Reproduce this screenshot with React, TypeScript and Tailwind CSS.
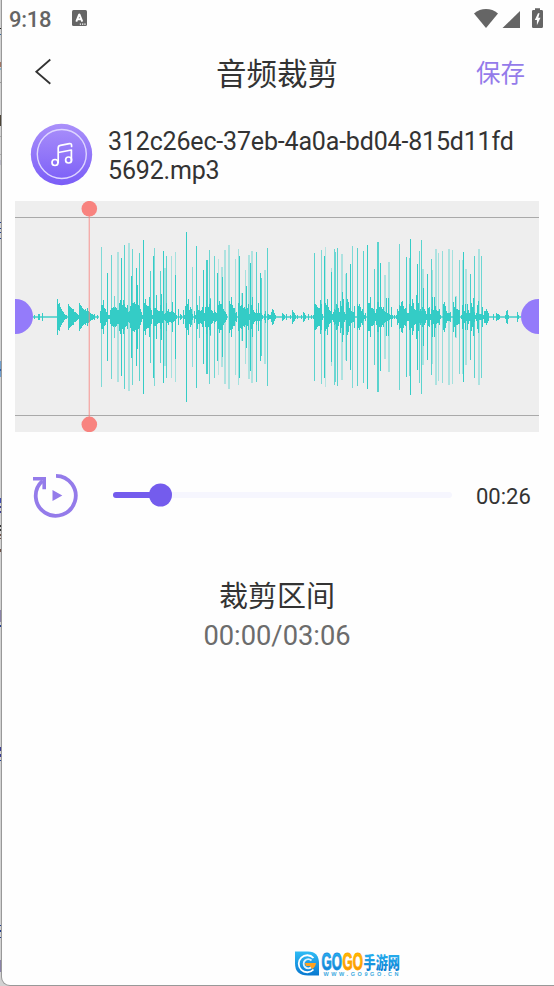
import React, { FC } from "react";

type Spike = [x: number, height: number, opacity?: number, width?: number];

// Tall peaks, measured from the centre line
const SPIKES: Spike[] = [
	[101, 70, 0.6], [107, 44], [111, 62, 0.7], [114, 21, 0.7], [117, 65, 0.35, 2], [121, 59], [124, 72, 0.8],
	[128, 74, 0.35, 2], [131, 41], [132, 68, 0.7], [136, 49], [137, 32], [139, 64, 0.8], [143, 77],
	[150, 46, 0.8], [153, 61], [154, 69, 0.6], [156, 22], [160, 46, 0.8], [163, 66], [164, 49, 0.35, 2], [166, 61, 0.8],
	[171, 61, 0.4], [175, 42], [175, 65, 0.4], [186, 85], [192, 50, 0.5], [196, 71, 0.9], [199, 21, 0.7],
	[203, 47], [206, 57, 0.9, 2], [209, 67, 0.7], [210, 19, 0.7], [214, 61, 0.7], [217, 44], [218, 58, 0.3],
	[221, 50, 0.35, 2], [222, 40], [224, 67, 0.35, 2], [228, 72, 0.35, 2], [235, 58, 0.4], [238, 68, 0.4], [239, 61],
	[241, 24, 0.35, 2], [245, 47, 0.4], [246, 31], [248, 62, 0.35, 2], [250, 54], [251, 66, 0.35, 2], [256, 65, 0.8],
	[260, 44], [261, 39, 0.8], [264, 47, 0.35, 2], [267, 69, 0.8],
	[314, 64, 0.8], [321, 67, 0.6], [324, 61], [325, 70, 0.3], [331, 45], [331, 49, 0.4], [334, 68, 0.7],
	[335, 65, 0.7], [337, 69, 0.8], [341, 63, 0.35, 2], [346, 44, 0.9], [345, 43, 0.3], [350, 53], [352, 71, 0.6],
	[357, 69, 0.8], [363, 66, 0.8], [367, 72], [370, 20], [374, 48, 0.8], [377, 75, 0.8, 2], [380, 54],
	[384, 42, 0.35, 2], [388, 55, 0.35, 2], [399, 73, 0.7], [406, 60, 0.9], [409, 59, 0.6], [410, 78],
	[417, 53], [419, 66, 0.7], [421, 77, 0.8], [422, 48, 0.35, 2], [427, 43], [431, 58, 0.8], [432, 47, 0.4],
	[435, 68, 0.35, 2], [438, 64, 0.4], [442, 66, 0.5], [448, 68, 0.35, 2], [452, 67, 0.4], [455, 21, 0.35, 2],
	[459, 57, 0.6], [462, 57, 0.4], [463, 65], [465, 48, 0.35, 2], [470, 43, 0.9], [474, 61, 0.8],
	[478, 68, 0.35, 2], [481, 61, 0.7],
];

// Low-level envelope, one value for each pixel column from x = 33
const LEVELS: number[] = [
	1, 2, 1, 1, 1, 3, 3, 1, 1, 4, 1, 1, 1, 1, 1, 1, 1, 1, 1, 1, 1, 1, 1, 1,
	18, 13, 14, 10, 8, 6, 5, 3, 2, 2, 1, 13, 11, 10, 9, 8, 8, 5, 5, 4, 3, 2,
	14, 12, 11, 9, 8, 7, 8, 6, 9, 6, 5, 4, 3, 3, 2, 3, 1, 1, 2, 1, 0,
	6, 12, 12, 17, 9, 8, 5, 6, 2, 2, 7, 9, 9, 10, 9, 10, 9, 7, 7, 14, 17, 15, 12, 17, 13, 10, 9, 12, 5, 6, 11,
	10, 14, 14, 15, 13, 14, 12, 12, 11, 8, 5, 2, 12, 14, 18, 12, 11, 11, 20, 9, 7, 2, 10, 9, 9, 8, 7, 6, 6,
	12, 23, 6, 15, 3, 4, 14, 6, 8, 5, 5, 6, 15, 5, 4, 2, 2, 1, 8, 1, 3, 2, 1, 7, 2, 11, 15, 13, 18, 7, 10,
	8, 3, 1, 6, 2, 5, 12, 7, 7, 6, 7, 10, 4, 4, 10, 17, 11, 10, 13, 18, 7, 6, 4, 7, 5, 4, 14, 12, 16, 13,
	13, 13, 8, 6, 5, 3, 1, 0, 16, 13, 20, 12, 9, 9, 4, 5, 1, 14, 11, 11, 12, 24, 9, 10, 8, 10, 9, 13, 3, 13,
	12, 20, 7, 5, 4, 8, 4, 14, 4, 10, 4, 2, 1, 3, 6, 1, 3, 3, 2, 2, 5, 8, 7, 4, 2, 1, 1, 1,
	1, 1, 1, 4, 3, 2, 1, 3, 1, 1, 1, 2, 1, 7, 5, 4, 2, 1, 2, 1, 1, 1, 2, 1, 5, 4, 2, 1, 1, 3, 1, 1, 2, 1, 2,
	13, 13, 12, 10, 9, 9, 17, 13, 3, 1, 6, 14, 12, 18, 10, 7, 6, 10, 3, 5, 8, 7, 13, 12, 9, 5, 16, 11, 25,
	18, 5, 3, 14, 18, 15, 9, 5, 6, 5, 5, 11, 1, 1, 13, 11, 13, 10, 6, 8, 4, 2, 4, 1, 14, 14, 14, 20, 9, 9,
	8, 6, 4, 8, 15, 15, 10, 14, 10, 8, 10, 6, 5, 19, 4, 19, 3, 2, 10, 2, 1, 2, 1, 2, 8, 6, 12, 11, 15, 16,
	11, 8, 9, 5, 4, 4, 13, 15, 11, 18, 14, 8, 7, 22, 9, 14, 6, 8, 6, 10, 29, 8, 6, 3, 15, 9, 10, 3, 8, 20,
	7, 20, 11, 7, 6, 6, 8, 2, 1, 1, 13, 15, 11, 6, 4, 4, 4, 5, 1, 1, 15, 10, 20, 8, 8, 7, 7, 1, 2, 12, 12,
	6, 13, 4, 13, 7, 4, 4, 14, 10, 19, 5, 2, 4, 12, 16, 3, 3, 3, 10, 2, 6, 6, 8, 6, 4, 1, 1, 1, 1, 3, 1, 1,
	4, 3, 3, 2, 1, 1, 1, 1, 1, 2, 6, 7, 2, 1, 1, 1, 1, 1, 1, 1, 1, 5, 2, 1, 1,
];

// Slivers of the window behind, seen along the left edge: [top, height, colour]
const EDGE_MARKS: [number, number, string][] = [
	[28, 1, "#222222"], [34, 1, "#3b6a9b"], [62, 5, "#a27564"], [68, 2, "#8bb4cc"], [82, 1, "#999999"],
	[115, 11, "#4c4437"], [136, 1, "#aaaaaa"], [154, 1, "#aaaaaa"], [160, 5, "#b9b9c4"],
	[222, 1, "#24408e"], [228, 1, "#24408e"], [232, 1, "#24408e"], [238, 1, "#24408e"],
	[361, 16, "#6f9dcc"], [369, 2, "#315da3"],
	[498, 5, "#3f4db0"], [506, 2, "#3b3f91"], [511, 2, "#3b3f91"],
	[525, 2, "#333333"], [529, 2, "#333333"], [534, 2, "#6d5248"], [538, 1, "#6d5248"], [549, 3, "#6d5248"],
	[610, 12, "#8a83a8"], [625, 2, "#24408e"],
	[747, 4, "#3a3d91"], [754, 3, "#3a3d91"], [760, 1, "#24408e"],
	[925, 1, "#24408e"], [930, 2, "#24408e"], [937, 1, "#24408e"], [960, 12, "#8a83a8"],
];

const StatusBar: FC = () => (
	<div className="flex h-[38px] items-center pl-[9px] pr-[10px] text-[#656565]">
		<span className="mt-px w-[42px] text-[22px] leading-none font-medium tracking-[-0.3px]">9:18</span>
		<svg className="mb-[2px] ml-[21px]" width="15" height="16" viewBox="0 0 15 16">
			<rect width="15" height="16" rx="1.5" fill="#656565" />
			<path d="M4.3 11.700 7.200 4.400h.2l2.900 7.300M5.500 9.300h3.600" fill="none" stroke="#fff" strokeWidth="1.9" strokeLinejoin="bevel" />
			<path d="M7.800 14.100H9m1 0h1.300m1 0h1.300" stroke="#fff" strokeWidth="1.2" />
		</svg>
		<svg className="mb-px ml-auto" width="70" height="22" viewBox="0 0 70 22" fill="#656565">
			<path d="M0 5.5C7-.4 17-.4 24 5.5L12 20Z" />
			<path d="M46 3v17H28.5Z" />
			<path d="M58 3.5c0-.9.5-1.5 1.3-1.5H61V.3h5V2h1.7c.8 0 1.3.6 1.3 1.500v15c0 .9-.5 1.500-1.300 1.500h-8.400c-.8 0-1.300-.6-1.300-1.500Z" />
			<path d="M64 5.200 60.800 12h2.100v5.300l3.600-7.500h-2.200L65.600 5.200Z" fill="#fff" />
		</svg>
	</div>
);

const Header: FC = () => (
	<header className="grid h-[70px] grid-cols-[1fr_auto_1fr] items-center pr-[29px] pl-[34px]">
		<button className="mb-[2px] w-fit" aria-label="Back">
			<svg width="18" height="28" viewBox="0 0 18 28" fill="none" stroke="#333" strokeWidth="1.8">
				<path d="M16.3 1.500 2.300 13.700l14 12" />
			</svg>
		</button>
		<h1 className="-ml-[5px] mt-[4px] text-[30.5px] leading-none text-[#333]">音频裁剪</h1>
		<button className="mt-[2px] justify-self-end text-[24.5px] leading-none text-[#947bea]">保存</button>
	</header>
);

const FileInfo: FC = () => (
	<section className="flex h-[93px] pl-[30px]">
		<svg className="mt-[15px]" width="63" height="63" viewBox="0 0 63 63">
			<defs>
				<linearGradient id="disc" x1="0" y1="0" x2="0" y2="1">
					<stop offset="0" stopColor="#aa90fa" />
					<stop offset="1" stopColor="#7a5df7" />
				</linearGradient>
			</defs>
			<circle cx="31.5" cy="31.5" r="30.7" fill="url(#disc)" />
			<circle cx="31.8" cy="31" r="24.5" fill="none" stroke="#ded5ff" strokeWidth="1.4" />
			<g fill="none" stroke="#fff" strokeWidth="1.7" strokeLinecap="round" strokeLinejoin="round">
				<circle cx="25" cy="39.5" r="3" />
				<circle cx="38.6" cy="37" r="3" />
				<path d="M28.200 39.500V25q0-2.200 2.200-2.600l9-1.800q2.200-.4 2.200 1.900v1M28.400 29.500l13-2.500v10" />
			</g>
		</svg>
		<p className="mt-[19px] ml-[15px] w-[420px] text-[25px] leading-[29px] tracking-[-0.17px] text-[#333]">
			312c26ec-37eb-4a0a-bd04-815d11fd
			<br />
			5692.mp3
		</p>
	</section>
);

const Waveform: FC = () => (
	<svg className="ml-[15px] block" width="524" height="231" viewBox="15 201 524 231">
		<rect x="15" y="201" width="524" height="231" fill="#eeeeee" />
		<g shapeRendering="crispEdges">
			<path d="M15 217.5h524M15 415.5h524" stroke="#a9a9a9" />
			<g fill="#34ccc6">
				{SPIKES.map(([x, height, opacity = 1, width = 1], i) => (
					<rect key={i} x={x} y={317 - height} width={width} height={height * 2} opacity={opacity} />
				))}
				{LEVELS.map((level, i) => (
					<rect key={i} x={33 + i} y={317 - level} width="1" height={level * 2} opacity={level === 1 ? 0.7 : 1} />
				))}
			</g>
		</g>
		<circle cx="15.5" cy="316.5" r="17.5" fill="#947bfa" />
		<circle cx="538.5" cy="316.5" r="17.5" fill="#947bfa" />
		<path d="M89.3 209v215" stroke="#f8837f" strokeWidth="1.4" opacity="0.6" />
		<circle cx="89.3" cy="208.7" r="7.8" fill="#f8837f" />
		<circle cx="89.3" cy="424.4" r="7.8" fill="#f8837f" />
	</svg>
);

const Player: FC = () => (
	<section className="mt-[40px] flex h-[48px] items-center pl-[32px]">
		<svg width="48" height="48" viewBox="32 472 48 48">
			<path d="M56 475.800A20 20 0 1 1 42.500 480.800" fill="none" stroke="#947bea" strokeWidth="3.8" />
			<path d="M33 478.800h11.200v10.500" fill="none" stroke="#947bea" strokeWidth="3.6" />
			<path d="M52.500 490v11l9.800-5.500Z" fill="#947bea" />
		</svg>
		<div className="relative mb-[2px] ml-[33px] h-[6px] w-[339px] rounded-full bg-[#f6f6fe]">
			<div className="h-full w-[48px] rounded-full bg-[#745ced]" />
			<div className="absolute top-1/2 left-[36px] size-[23px] -translate-y-1/2 rounded-full bg-[#745ced]" />
		</div>
		<span className="mt-[2px] ml-[24px] text-[22px] leading-none text-[#333]">00:26</span>
	</section>
);

const Watermark: FC = () => (
	<svg className="absolute top-[944px] left-[293px] overflow-visible" width="116" height="40" viewBox="293 944 116 40">
		<defs>
			<linearGradient id="blue" x1="0" y1="0" x2="0" y2="1">
				<stop offset="0" stopColor="#2fbcf5" />
				<stop offset="1" stopColor="#0878d0" />
			</linearGradient>
			<linearGradient id="orange" x1="0" y1="0" x2="0" y2="1">
				<stop offset="0" stopColor="#ffc800" />
				<stop offset="1" stopColor="#f98a00" />
			</linearGradient>
		</defs>
		<path d="M295 951.500h13q11 0 11 12v12h-11q-13 0-13-12Z" fill="url(#blue)" />
		<path d="M313.500 958a8.500 8.500 0 1 0 0 11.500" fill="none" stroke="#fff" strokeWidth="1.8" />
		<path d="M311.500 960.500a4.600 4.600 0 1 0 0 6.500" fill="none" stroke="#d8f2ff" strokeWidth="1.8" />
		<path d="M305 963h11q-.5 4-4 6l-2-3H306Z" fill="#ffa11c" />
		<g fontFamily="'Liberation Sans', sans-serif" fontWeight="900">
			<g fontSize="23" strokeWidth="0.9">
				<text x="321.500" y="969.500" textLength="20.500" lengthAdjust="spacingAndGlyphs" fill="url(#blue)" stroke="#1a90e0">GO</text>
				<text x="342.500" y="969.500" textLength="20.500" lengthAdjust="spacingAndGlyphs" fill="url(#orange)" stroke="#fda400">GO</text>
			</g>
			<text x="363.500" y="968.500" fontSize="16.500" textLength="36.500" lengthAdjust="spacingAndGlyphs" fill="url(#blue)" fontFamily="'Noto Sans CJK SC', sans-serif">手游网</text>
			<text x="323.500" y="976" fontSize="5.500" fontWeight="700" textLength="75" fill="#3caade">WWW.GO9GO.CN</text>
		</g>
	</svg>
);

const App: FC = () => {
	return (
		<div className="relative h-[986px] w-[554px] overflow-hidden bg-[#d2d2d2] font-[Roboto,'Noto_Sans_CJK_SC',sans-serif]">
			{EDGE_MARKS.map(([top, height, color]) => (
				<div key={top} className="absolute left-0 w-[2px]" style={{ top, height, backgroundColor: color }} />
			))}
			<main className="relative ml-[2px] h-[985px] rounded-bl-[8px] bg-[#fefefe] shadow-[0_0_0_1px_#999]">
				<div className="-ml-[2px]">
					<StatusBar />
					<Header />
					<FileInfo />
					<Waveform />
					<Player />
					<section className="mt-[60px] flex flex-col items-center text-center">
						<h2 className="text-[29px] leading-[34px] text-[#333]">裁剪区间</h2>
						<p className="mt-[6px] text-[27.3px] leading-[32px] text-[#6c6c6c]">00:00/03:06</p>
					</section>
				</div>
			</main>
			<Watermark />
		</div>
	);
};

export default App;
